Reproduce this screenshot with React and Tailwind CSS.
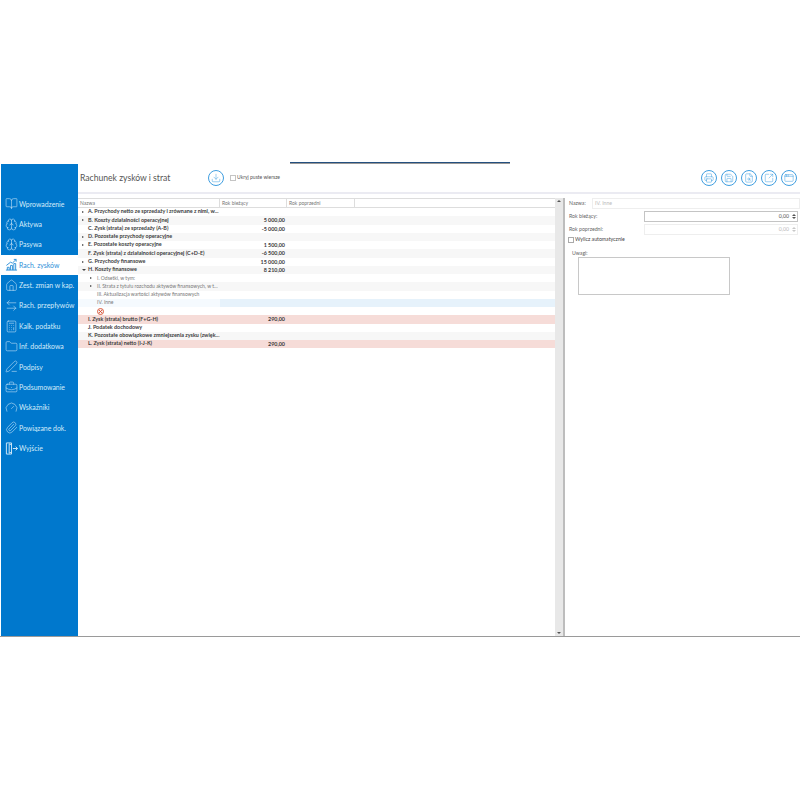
import React from "react";
import {
  BookOpen,
  Brain,
  House,
  ArrowLeftRight,
  Calculator,
  Folder,
  PenLine,
  BriefcaseBusiness,
  Gauge,
  Paperclip,
  Printer,
  Save,
  FileSearch,
  SquareArrowOutUpRight,
  AppWindow,
  Download,
} from "lucide-react";

// Bars with a rising arrow, no package has this one
const ProfitIcon = ({ size }) => (
  <svg width={size} height={size} viewBox="0 0 14 14" fill="none" stroke="currentColor" strokeWidth="1">
    <path d="M1 13h12M2.5 13v-3h2v3M6 13V8h2v5M9.5 13V6h2v7" />
    <path d="M1.5 8 6 4.5l2 1L12 1.5M9.5 1.5H12V4" />
  </svg>
);

// Door with an arrow going out
const ExitIcon = ({ size }) => (
  <svg width={size} height={size} viewBox="0 0 14 14" fill="none" stroke="currentColor" strokeWidth="1">
    <path d="M1.5 1h5.5v12H1.5zM7 3l-2.5-1v10L7 11" />
    <path d="M8.5 7h5M11.5 5l2 2-2 2" />
  </svg>
);

const navItems = [
  { label: "Wprowadzenie", icon: BookOpen },
  { label: "Aktywa", icon: Brain },
  { label: "Pasywa", icon: Brain },
  { label: "Rach. zysków", icon: ProfitIcon, active: true },
  { label: "Zest. zmian w kap.", icon: House },
  { label: "Rach. przepływów", icon: ArrowLeftRight },
  { label: "Kalk. podatku", icon: Calculator },
  { label: "Inf. dodatkowa", icon: Folder },
  { label: "Podpisy", icon: PenLine },
  { label: "Podsumowanie", icon: BriefcaseBusiness },
  { label: "Wskaźniki", icon: Gauge },
  { label: "Powiązane dok.", icon: Paperclip },
  { label: "Wyjście", icon: ExitIcon },
];

const rows = [
  { name: "A. Przychody netto ze sprzedaży i zrównane z nimi, w...", arrow: "right", bold: true },
  { name: "B. Koszty działalności operacyjnej", value: "5 000,00", arrow: "right", bold: true },
  { name: "C. Zysk (strata) ze sprzedaży (A-B)", value: "-5 000,00", bold: true },
  { name: "D. Pozostałe przychody operacyjne", arrow: "right", bold: true },
  { name: "E. Pozostałe koszty operacyjne", value: "1 500,00", arrow: "right", bold: true },
  { name: "F. Zysk (strata) z działalności operacyjnej (C+D-E)", value: "-6 500,00", bold: true },
  { name: "G. Przychody finansowe", value: "15 000,00", arrow: "right", bold: true },
  { name: "H. Koszty finansowe", value: "8 210,00", arrow: "down", bold: true },
  { name: "I. Odsetki, w tym:", arrow: "right", sub: true },
  { name: "II. Strata z tytułu rozchodu aktywów finansowych, w t...", arrow: "right", sub: true },
  { name: "III. Aktualizacja wartości aktywów finansowych", sub: true },
  { name: "IV. Inne", sub: true, selected: true },
  { error: true },
  { name: "I. Zysk (strata) brutto (F+G-H)", value: "290,00", bold: true, total: true },
  { name: "J. Podatek dochodowy", bold: true },
  { name: "K. Pozostałe obowiązkowe zmniejszenia zysku (zwięk...", bold: true },
  { name: "L. Zysk (strata) netto (I-J-K)", value: "290,00", bold: true, total: true },
];

function NavItem({ label, icon: Icon, active }) {
  return (
    <div
      className={`flex h-[20.4px] items-center ${
        active ? "bg-white text-[#2b8fd8]" : "text-[#d5ebf9]"
      }`}
    >
      <span className="ml-[2px] flex w-[16px] shrink-0 justify-center">
        <Icon size={13} strokeWidth={1} />
      </span>
      <span className="whitespace-nowrap text-[6.9px]">{label}</span>
    </div>
  );
}

function RoundButton({ icon: Icon }) {
  return (
    <div className="flex h-[16px] w-[16px] items-center justify-center rounded-full border border-[#3f9ee0] text-[#3f9ee0]">
      <Icon size={10} strokeWidth={1.2} />
    </div>
  );
}

function Row({ row, index }) {
  let bg = index % 2 === 1 ? "bg-[#f7f7f7]" : "bg-white";
  if (row.total) bg = "bg-[#f6dcd8]";
  if (row.selected) bg = "bg-[#e6f2fb]";
  return (
    <div className={`flex h-[8.26px] items-center ${bg}`}>
      <div
        className={`flex w-[142px] items-center self-stretch whitespace-nowrap leading-none ${
          row.bold ? "text-[5.4px] font-bold text-[#3a3a3a]" : "text-[5px] text-[#777777]"
        } ${row.selected ? "bg-[#f5fafe]" : ""}`}
      >
        <span className={`flex shrink-0 ${row.sub ? "ml-[10px] w-[9px] pl-[2px]" : "ml-[3px] w-[7px] pl-px"}`}>
          {row.arrow === "right" && (
            <span className="h-0 w-0 border-y-[1.5px] border-l-[2px] border-y-transparent border-l-[#444444]" />
          )}
          {row.arrow === "down" && (
            <span className="h-0 w-0 border-x-[2px] border-t-[2px] border-x-transparent border-t-[#444444]" />
          )}
        </span>
        {row.error ? (
          <svg className="ml-[9px]" width="7" height="7" viewBox="0 0 7 7" fill="none">
            <circle cx="3.5" cy="3.5" r="3" fill="#f4f0ee" stroke="#dd5a3f" strokeWidth="1" />
            <path d="M2.2 2.2l2.6 2.6M4.8 2.2 2.2 4.8" stroke="#d8432a" strokeWidth="1" />
          </svg>
        ) : (
          row.name
        )}
      </div>
      <div className="w-[66px] self-stretch pr-px text-right text-[5.4px] leading-[8.26px] font-bold text-[#3a3a3a]">
        {row.value}
      </div>
    </div>
  );
}

function Spinner({ muted }) {
  const color = muted ? "#c8c8c8" : "#555555";
  return (
    <span className="ml-[3px] flex flex-col gap-[1px]">
      <span className="h-0 w-0 border-x-[2px] border-b-[2px] border-x-transparent" style={{ borderBottomColor: color }} />
      <span className="h-0 w-0 border-x-[2px] border-t-[2px] border-x-transparent" style={{ borderTopColor: color }} />
    </span>
  );
}

export default function App() {
  return (
    <div className="h-[800px] w-[800px] overflow-hidden bg-white font-['Lato',sans-serif]">
      <div className="h-[162px]" />
      <div className="ml-[290px] h-[2px] w-[220px] border-b border-[#999999] bg-[#24507f]" />
      <div className="flex h-[473px] border-b border-[#9a9a9a] pl-px">
        {/* Side menu */}
        <aside className="w-[77px] shrink-0 bg-[#0078cd] pt-[29.5px]">
          {navItems.map((item) => (
            <NavItem key={item.label} {...item} />
          ))}
        </aside>

        <main className="flex min-w-0 flex-1 flex-col">
          {/* Toolbar */}
          <div className="flex h-[28px] shrink-0 items-center">
            <h1 className="ml-[2px] w-[128px] whitespace-nowrap text-[8.6px] text-[#555555]">
              Rachunek zysków i strat
            </h1>
            <RoundButton icon={Download} />
            <span className="ml-[6px] h-[6px] w-[6px] border border-[#c4c4c4]" />
            <span className="ml-px text-[5px] text-[#555555]">Ukryj puste wiersze</span>
            <div className="mr-[3px] ml-auto flex gap-[4px]">
              <RoundButton icon={Printer} />
              <RoundButton icon={Save} />
              <RoundButton icon={FileSearch} />
              <RoundButton icon={SquareArrowOutUpRight} />
              <RoundButton icon={AppWindow} />
            </div>
          </div>
          <div className="h-[2px] shrink-0 bg-[#ebebf2]" />

          <div className="flex min-h-0 flex-1 pt-[4px]">
            {/* Table */}
            <div className="flex w-[485px] shrink-0">
              <div className="w-[477px] shrink-0">
                <div className="flex h-[10px] border-y border-[#dddddd] text-[5px] leading-[8px] text-[#777777]">
                  <div className="w-[142px] border-r border-[#dddddd] pl-[2px]">Nazwa</div>
                  <div className="w-[67px] border-r border-[#dddddd] pl-[2px]">Rok bieżący</div>
                  <div className="w-[68px] border-r border-[#dddddd] pl-[2px]">Rok poprzedni</div>
                </div>
                {rows.map((row, i) => (
                  <Row key={i} row={row} index={i} />
                ))}
              </div>
              <div className="flex w-[8px] shrink-0 flex-col justify-between bg-[#e8e8e8] p-[2px]">
                <span className="h-0 w-0 border-x-[2px] border-b-[2px] border-x-transparent border-b-[#555555]" />
                <span className="h-0 w-0 border-x-[2px] border-t-[2px] border-x-transparent border-t-[#555555]" />
              </div>
            </div>
            <div className="w-[2px] shrink-0 bg-[#bdbdbd]" />

            {/* Detail panel */}
            <div className="flex min-w-0 flex-1 flex-col pl-[4px] text-[5.2px] text-[#666666]">
              <div className="flex h-[11px] items-center">
                <span className="w-[23px]">Nazwa:</span>
                <div className="flex h-[11px] flex-1 items-center border border-[#eeeeee] pl-[2px] text-[#bbbbbb]">IV. Inne</div>
              </div>
              <div className="mt-[2px] flex h-[11px] items-center">
                <span className="w-[75px]">Rok bieżący:</span>
                <div className="mr-[2px] flex h-[11px] flex-1 items-center justify-end border border-[#c4c4c4] pr-[1px] text-[#555555]">
                  0,00
                  <Spinner />
                </div>
              </div>
              <div className="mt-[2px] flex h-[11px] items-center">
                <span className="w-[75px]">Rok poprzedni:</span>
                <div className="mr-[2px] flex h-[11px] flex-1 items-center justify-end border border-[#eeeeee] pr-[1px] text-[#bbbbbb]">
                  0,00
                  <Spinner muted />
                </div>
              </div>
              <div className="mt-[1px] -ml-px flex h-[8px] items-center">
                <span className="h-[6px] w-[6px] border border-[#aaaaaa]" />
                <span className="ml-px text-[#444444]">Wylicz automatycznie</span>
              </div>
              <div className="mt-[5.5px] ml-[3px]">Uwagi:</div>
              <div className="ml-[9px] h-[38px] w-[152px] border border-[#c8c8c8]" />
            </div>
          </div>
        </main>
      </div>
    </div>
  );
}
